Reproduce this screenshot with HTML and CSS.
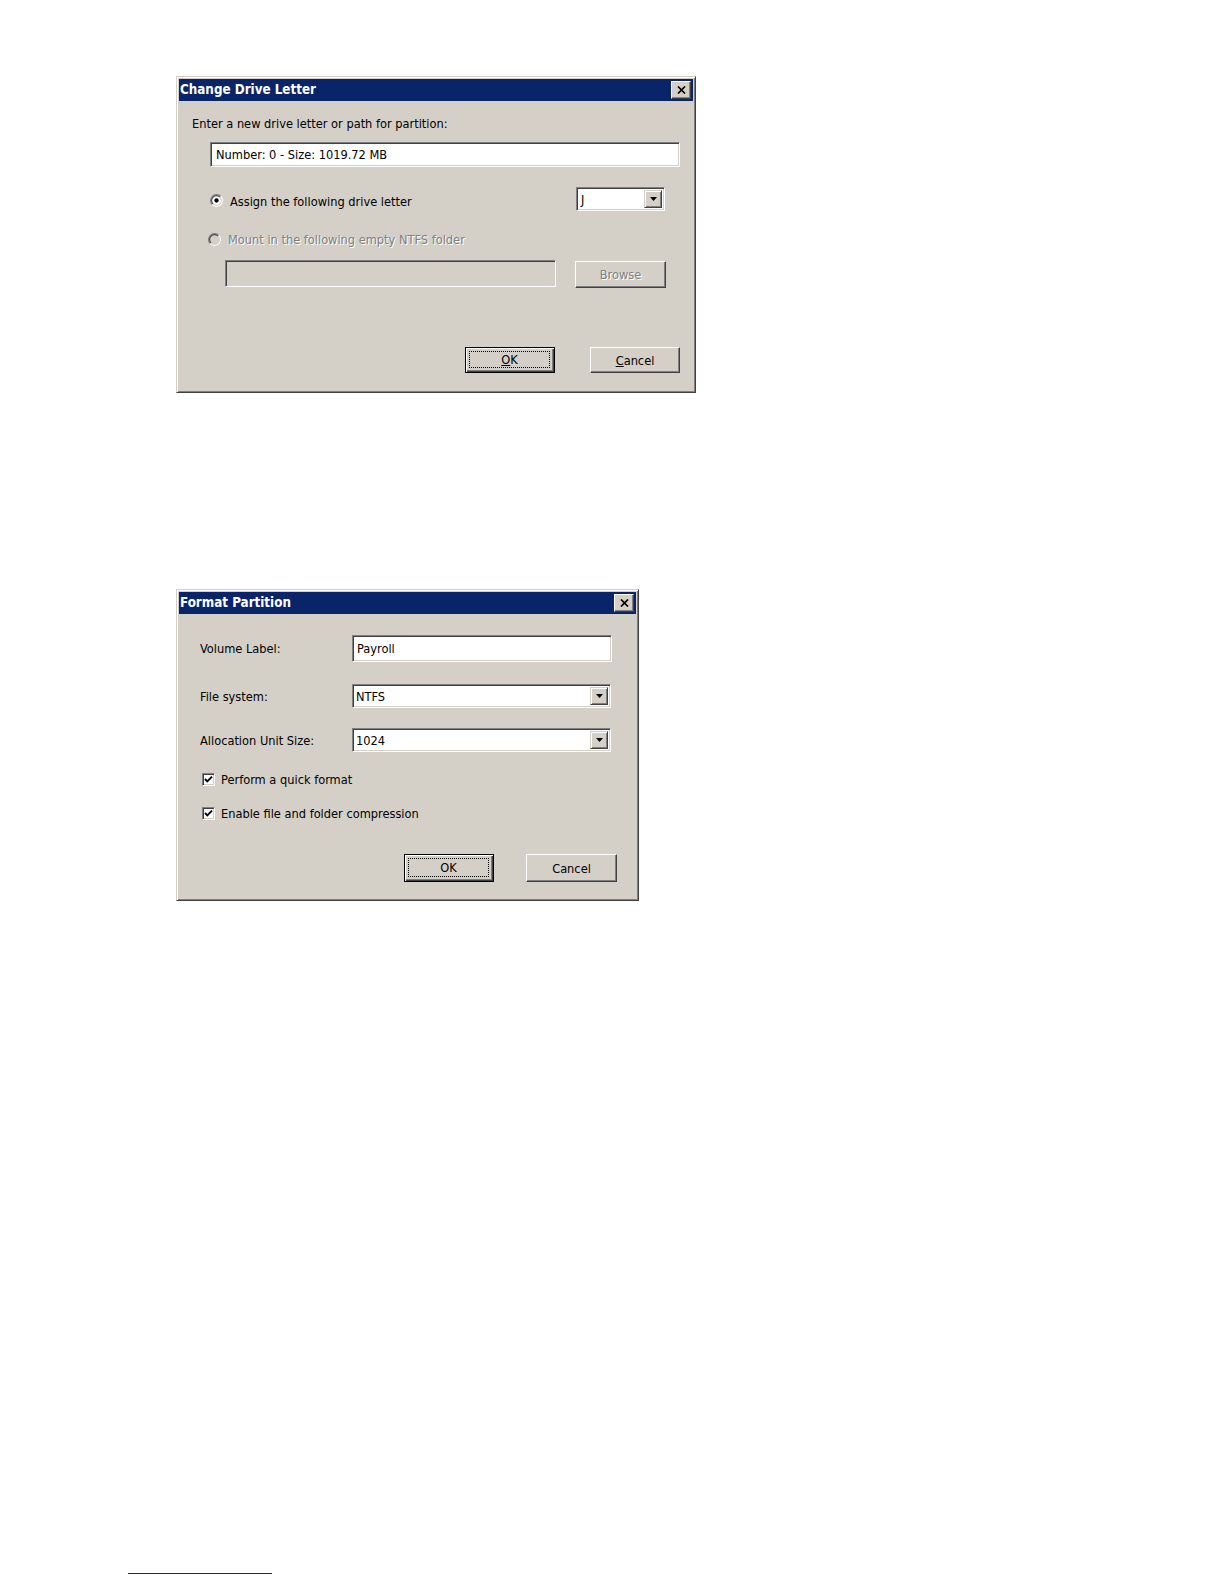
FILE: index.html
```html
<!DOCTYPE html>
<html>
<head>
<meta charset="utf-8">
<title>Dialogs</title>
<link rel="stylesheet" href="styles.css">
</head>
<body>
<div class="page">

  <div class="dialog dlg-drive">
    <div class="titlebar">
      <span class="title">Change Drive Letter</span>
      <span class="close"><svg width="9" height="8" viewBox="0 0 9 8"><path d="M1 0.5 L8 7.5 M8 0.5 L1 7.5" stroke="#000" stroke-width="1.7" fill="none"/></svg></span>
    </div>
    <div class="body body-drive">
      <div class="prompt">Enter a new drive letter or path for partition:</div>
      <div class="field field-info">Number: 0 - Size: 1019.72 MB</div>
      <div class="opt-row opt-assign">
        <span class="radio"><svg width="13" height="13" viewBox="0 0 12 12"><circle cx="6" cy="6" r="5.5" fill="#fff"/><path d="M9.9 2.1 A5.5 5.5 0 0 0 2.1 9.9" stroke="#808080" fill="none"/><path d="M2.1 9.9 A5.5 5.5 0 0 0 9.9 2.1" stroke="#fff" fill="none"/><path d="M9.2 2.8 A4.5 4.5 0 0 0 2.8 9.2" stroke="#404040" fill="none"/><path d="M2.8 9.2 A4.5 4.5 0 0 0 9.2 2.8" stroke="#d4d0c8" fill="none"/><circle cx="6" cy="6" r="2" fill="#000"/></svg></span>
        <span class="opt-label">Assign the following drive letter</span>
        <div class="combo combo-letter">
          <span class="combo-text">J</span>
          <span class="drop"><svg width="7" height="4" viewBox="0 0 7 4"><path d="M0 0 H7 L3.5 4 Z" fill="#000"/></svg></span>
        </div>
      </div>
      <div class="opt-row opt-mount disabled">
        <span class="radio"><svg width="13" height="13" viewBox="0 0 12 12"><circle cx="6" cy="6" r="5.5" fill="#d4d0c8"/><path d="M9.9 2.1 A5.5 5.5 0 0 0 2.1 9.9" stroke="#808080" fill="none"/><path d="M2.1 9.9 A5.5 5.5 0 0 0 9.9 2.1" stroke="#fff" fill="none"/><path d="M9.2 2.8 A4.5 4.5 0 0 0 2.8 9.2" stroke="#404040" fill="none"/><path d="M2.8 9.2 A4.5 4.5 0 0 0 9.2 2.8" stroke="#d4d0c8" fill="none"/></svg></span>
        <span class="opt-label">Mount in the following empty NTFS folder</span>
      </div>
      <div class="mount-row">
        <div class="field field-disabled"></div>
        <div class="btn btn-browse disabled">Browse</div>
      </div>
      <div class="btn-row btn-row-drive">
        <div class="btn btn-default"><span class="focus"><u>O</u>K</span></div>
        <div class="btn"><u>C</u>ancel</div>
      </div>
    </div>
  </div>

  <div class="dialog dlg-format">
    <div class="titlebar">
      <span class="title">Format Partition</span>
      <span class="close"><svg width="9" height="8" viewBox="0 0 9 8"><path d="M1 0.5 L8 7.5 M8 0.5 L1 7.5" stroke="#000" stroke-width="1.7" fill="none"/></svg></span>
    </div>
    <div class="body body-format">
      <div class="form-row row-volume">
        <span class="form-label">Volume Label:</span>
        <div class="field field-volume">Payroll</div>
      </div>
      <div class="form-row row-fs">
        <span class="form-label">File system:</span>
        <div class="combo combo-wide">
          <span class="combo-text">NTFS</span>
          <span class="drop"><svg width="7" height="4" viewBox="0 0 7 4"><path d="M0 0 H7 L3.5 4 Z" fill="#000"/></svg></span>
        </div>
      </div>
      <div class="form-row row-alloc">
        <span class="form-label">Allocation Unit Size:</span>
        <div class="combo combo-wide">
          <span class="combo-text">1024</span>
          <span class="drop"><svg width="7" height="4" viewBox="0 0 7 4"><path d="M0 0 H7 L3.5 4 Z" fill="#000"/></svg></span>
        </div>
      </div>
      <div class="check-row check-quick">
        <span class="checkbox"><svg width="9" height="9" viewBox="0 0 9 9"><path d="M1 4 L3.3 6.4 L8 1.6" stroke="#000" stroke-width="1.9" fill="none"/></svg></span>
        <span class="check-label">Perform a quick format</span>
      </div>
      <div class="check-row check-compress">
        <span class="checkbox"><svg width="9" height="9" viewBox="0 0 9 9"><path d="M1 4 L3.3 6.4 L8 1.6" stroke="#000" stroke-width="1.9" fill="none"/></svg></span>
        <span class="check-label">Enable file and folder compression</span>
      </div>
      <div class="btn-row btn-row-format">
        <div class="btn btn-default btn-ok2"><span class="focus">OK</span></div>
        <div class="btn btn-cancel2">Cancel</div>
      </div>
    </div>
  </div>

  <div class="footnote-rule"></div>
</div>
</body>
</html>
```

FILE: styles.css
```css
html, body {
  margin: 0;
  padding: 0;
  background: #fff;
}

body {
  width: 1224px;
  min-height: 1584px;
  font-family: "DejaVu Sans Condensed", "DejaVu Sans", sans-serif;
  font-stretch: semi-condensed;
  font-size: 12.7px;
  color: #000;
}

.page {
  padding-top: 76px;
  display: flex;
  flex-direction: column;
  align-items: flex-start;
}

/* ---------- window frame ---------- */
.dialog {
  box-sizing: border-box;
  margin-left: 176px;
  background: #d4d0c8;
  border: 1px solid;
  border-color: #d4d0c8 #404040 #404040 #d4d0c8;
  box-shadow: inset 1px 1px 0 #fff, inset -1px -1px 0 #808080;
  padding: 2px;
  display: flex;
  flex-direction: column;
}

.dlg-drive {
  width: 520px;
  height: 317px;
}

.dlg-format {
  width: 463px;
  height: 312px;
  margin-top: 196px;
}

.titlebar {
  height: 22px;
  flex: none;
  background: #0a246a;
  display: flex;
  align-items: center;
  justify-content: space-between;
  padding: 0 2px 0 1px;
}

.title {
  color: #fff;
  font-weight: bold;
  font-size: 13.3px;
  line-height: 16px;
}

.close {
  box-sizing: border-box;
  width: 20px;
  height: 18px;
  background: #d4d0c8;
  border: 1px solid;
  border-color: #fff #404040 #404040 #fff;
  box-shadow: inset -1px -1px 0 #808080;
  display: flex;
  align-items: center;
  justify-content: center;
}

.close svg {
  display: block;
}

/* ---------- common controls ---------- */
.field {
  box-sizing: border-box;
  background: #fff;
  border: 1px solid;
  border-color: #808080 #fff #fff #808080;
  box-shadow: inset 1px 1px 0 #404040, inset -1px -1px 0 #d4d0c8;
  display: flex;
  align-items: center;
  line-height: 15px;
}

.combo {
  box-sizing: border-box;
  background: #fff;
  border: 1px solid;
  border-color: #808080 #fff #fff #808080;
  box-shadow: inset 1px 1px 0 #404040, inset -1px -1px 0 #d4d0c8;
  display: flex;
  align-items: center;
  padding: 2px 2px 2px 4px;
}

.combo-text {
  flex: 1;
  line-height: 15px;
}

.drop {
  box-sizing: border-box;
  width: 18px;
  align-self: stretch;
  background: #d4d0c8;
  border: 1px solid;
  border-color: #d4d0c8 #404040 #404040 #d4d0c8;
  box-shadow: inset 1px 1px 0 #fff, inset -1px -1px 0 #808080;
  display: flex;
  align-items: center;
  justify-content: center;
}

.drop svg,
.radio svg,
.checkbox svg {
  display: block;
}

.btn {
  box-sizing: border-box;
  width: 90px;
  height: 26px;
  background: #d4d0c8;
  border: 1px solid;
  border-color: #fff #404040 #404040 #fff;
  box-shadow: inset -1px -1px 0 #808080;
  display: flex;
  align-items: center;
  justify-content: center;
  line-height: 15px;
}

.btn-default {
  border: 1px solid #000;
  box-shadow: inset 1px 1px 0 #fff, inset -1px -1px 0 #404040, inset -2px -2px 0 #808080;
  padding: 3px 4px 4px 3px;
  align-items: stretch;
}

.focus {
  flex: 1;
  border: 1px dotted #000;
  display: flex;
  align-items: center;
  justify-content: center;
}

.disabled,
.disabled .opt-label {
  color: #808080;
  text-shadow: 1px 1px 0 #fff;
}

.radio {
  width: 13px;
  height: 13px;
  flex: none;
}

.opt-label {
  margin-left: 7px;
  line-height: 15px;
}

/* ---------- Change Drive Letter ---------- */
.body-drive {
  padding: 15px 0 0 13px;
  display: flex;
  flex-direction: column;
}

.prompt {
  line-height: 15px;
}

.field-info {
  margin-top: 11px;
  margin-left: 18px;
  width: 470px;
  height: 25px;
  padding-left: 5px;
}

.opt-row {
  display: flex;
  align-items: center;
}

.opt-assign {
  margin-top: 20px;
  height: 24px;
}

.opt-assign .radio {
  margin-left: 18px;
  margin-top: 3px;
}

.opt-assign .opt-label {
  margin-top: 5px;
}

.combo-letter {
  margin-left: auto;
  margin-right: 28px;
  width: 89px;
  height: 24px;
}

.opt-mount {
  margin-top: 21px;
  height: 15px;
}

.opt-mount .radio {
  margin-left: 16px;
}

.mount-row {
  display: flex;
  align-items: flex-start;
  margin-top: 13px;
}

.field-disabled {
  margin-left: 33px;
  width: 331px;
  height: 27px;
  background: #d4d0c8;
}

.btn-browse {
  margin-left: 19px;
  margin-top: 1px;
  width: 91px;
  height: 27px;
}

.btn-row {
  display: flex;
  justify-content: flex-end;
}

.btn-row-drive {
  margin-top: 59px;
  margin-right: 13px;
  gap: 35px;
}

/* ---------- Format Partition ---------- */
.body-format {
  padding: 0 0 0 21px;
  display: flex;
  flex-direction: column;
}

.form-row {
  display: grid;
  grid-template-columns: 152px 260px;
  align-items: center;
}

.form-label {
  line-height: 15px;
}

.row-volume {
  margin-top: 21px;
  height: 27px;
}

.field-volume {
  height: 27px;
  padding-left: 4px;
}

.row-fs {
  margin-top: 22px;
  height: 24px;
}

.row-alloc {
  margin-top: 20px;
  height: 24px;
}

.combo-wide {
  height: 24px;
  width: 259px;
  padding-left: 3px;
}

.check-row {
  display: flex;
  align-items: center;
  margin-left: 2px;
  height: 13px;
}

.check-quick {
  margin-top: 21px;
}

.check-compress {
  margin-top: 21px;
}

.checkbox {
  box-sizing: border-box;
  width: 13px;
  height: 13px;
  flex: none;
  background: #fff;
  border: 1px solid;
  border-color: #808080 #fff #fff #808080;
  box-shadow: inset 1px 1px 0 #404040, inset -1px -1px 0 #d4d0c8;
  display: flex;
  align-items: center;
  justify-content: center;
}

.check-label {
  margin-left: 6px;
  line-height: 15px;
}

.btn-row-format {
  margin-top: 34px;
  margin-right: 19px;
  gap: 32px;
}

.btn-ok2 {
  height: 28px;
}

.btn-cancel2 {
  width: 91px;
  height: 28px;
}

/* ---------- footnote rule ---------- */
.footnote-rule {
  margin-top: 672px;
  margin-left: 128px;
  width: 144px;
  height: 1px;
  background: #1c1c8c;
}
```
